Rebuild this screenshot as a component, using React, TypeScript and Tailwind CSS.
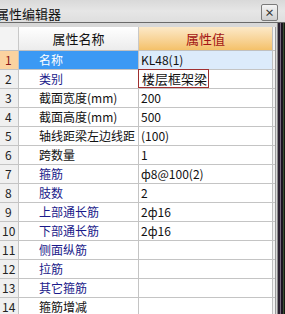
import React from "react";

type Row = { n: number; name: string; value: string; kind: "black" | "blue" | "sel" };

const rows: Row[] = [
  { n: 1, name: "名称", value: "KL48(1)", kind: "sel" },
  { n: 2, name: "类别", value: "楼层框架梁", kind: "blue" },
  { n: 3, name: "截面宽度(mm)", value: "200", kind: "black" },
  { n: 4, name: "截面高度(mm)", value: "500", kind: "black" },
  { n: 5, name: "轴线距梁左边线距", value: "(100)", kind: "black" },
  { n: 6, name: "跨数量", value: "1", kind: "black" },
  { n: 7, name: "箍筋", value: "ф8@100(2)", kind: "blue" },
  { n: 8, name: "肢数", value: "2", kind: "blue" },
  { n: 9, name: "上部通长筋", value: "2ф16", kind: "blue" },
  { n: 10, name: "下部通长筋", value: "2ф16", kind: "blue" },
  { n: 11, name: "侧面纵筋", value: "", kind: "blue" },
  { n: 12, name: "拉筋", value: "", kind: "blue" },
  { n: 13, name: "其它箍筋", value: "", kind: "blue" },
  { n: 14, name: "箍筋增减", value: "", kind: "black" },
];

const font = { fontFamily: '"Noto Sans CJK SC", "Liberation Sans", sans-serif' };

export default function App() {
  return (
    <div
      className="w-[285px] h-[314px] overflow-hidden flex flex-col bg-[#d4d4d4] text-[12px] leading-none"
      style={font}
    >
      {/* Title bar */}
      <div className="h-[22px] shrink-0 flex items-center bg-gradient-to-b from-[#d9d9d9] via-[#e6e6e6] to-[#dedede] relative">
        <span className="ml-[-4px] text-[13px] text-[#111] mt-[4px]">属性编辑器</span>
        <div className="absolute left-[261px] top-[4px] w-[17px] h-[17px] border border-[#7a7a7a] rounded-[2px] bg-gradient-to-b from-[#f4f4f4] to-[#cfcfcf] flex items-center justify-center">
          <span className="text-[10px] font-bold text-[#333] leading-none">×</span>
        </div>
      </div>
      <div className="h-px shrink-0 bg-[#6a6a6a]" />
      <div className="flex flex-1 min-h-0">
        <div className="w-[277px] flex flex-col bg-[#d8d8d8] pt-[4px]">
          <div className="w-[276px] border-r border-[#9a9a9a] bg-[#f2f2f2] flex-1 flex flex-col">
            {/* header */}
            <div className="flex h-[24px] border-b border-[#c0c0c0] shrink-0">
              <div className="w-[19px] bg-[#f3f3f3] border-r border-[#c8c8c8]" />
              <div className="w-[120px] border-r border-[#c8c8c8] bg-gradient-to-b from-white to-[#ececec] flex items-center justify-center text-[13px] text-[#111]">
                属性名称
              </div>
              <div className="w-[134px] border-r border-[#c0c0c0] bg-gradient-to-b from-[#fce9c8] to-[#f4c169] flex items-center justify-center text-[13px] text-[#a31515]">
                属性值
              </div>
            </div>
            {rows.map((r) => (
              <div key={r.n} className="flex h-[19px] border-b border-[#c4c4c4] shrink-0">
                <div
                  className={
                    "w-[19px] border-r border-[#c4c4c4] flex items-center pl-[2px] text-[12px] " +
                    (r.kind === "sel" ? "bg-[#fbd3a0] text-[#8b1a1a] pl-[5px]" : "bg-[#f0f0f0] text-[#222]") +
                    (r.n < 10 ? " pl-[5px]" : "")
                  }
                >
                  {r.n}
                </div>
                <div
                  className={
                    "w-[120px] border-r border-[#c4c4c4] flex items-center pl-[20px] whitespace-nowrap overflow-hidden text-[12px] " +
                    (r.kind === "sel"
                      ? "bg-[#3b99f4] text-white"
                      : r.kind === "blue"
                      ? "bg-white text-[#1a1a8a]"
                      : "bg-white text-[#111]")
                  }
                >
                  {r.name}
                </div>
                <div
                  className={
                    "w-[134px] border-r border-[#c0c0c0] flex items-center text-[12px] text-[#111] whitespace-nowrap " +
                    (r.kind === "sel" ? "bg-[#dcebfb] pl-[2px]" : "bg-white pl-[2px]")
                  }
                >
                  {r.n === 2 ? (
                    <div className="h-[19px] -mt-[1px] -ml-[3px] border border-[#a03030] flex items-center px-[3px] text-[13px] w-[71px]">
                      {r.value}
                    </div>
                  ) : (
                    r.value
                  )}
                </div>
              </div>
            ))}
          </div>
        </div>
        <div className="w-px bg-[#8a8a8a]" />
        <div className="flex-1 flex">
          <div className="w-[2px] bg-[#2a2030]" />
          <div className="w-[1px] bg-[#7a6a80]" />
          <div className="w-[2px] bg-[#1a1420]" />
          <div className="w-[1px] bg-[#3a5030]" />
          <div className="flex-1 bg-[#141a12]" />
        </div>
      </div>
    </div>
  );
}
